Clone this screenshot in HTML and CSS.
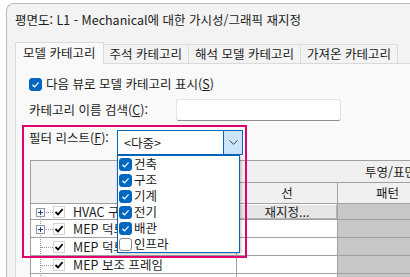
FILE: index.html
```html
<!DOCTYPE html>
<html lang="ko">
<head>
  <meta charset="UTF-8" />
  <title>가시성/그래픽 재지정</title>
  <link rel="stylesheet" href="styles.css">
</head>
<body>
  <div class="window">
    <div class="titlebar">평면도: L1 - Mechanical에 대한 가시성/그래픽 재지정</div>

    <div class="tabs">
      <div class="tab active">모델 카테고리</div>
      <div class="tab">주석 카테고리</div>
      <div class="tab">해석 모델 카테고리</div>
      <div class="tab">가져온 카테고리</div>
    </div>

    <div class="panel">
      <div class="check-row">
        <span class="cb on"><svg viewBox="0 0 13 13"><path d="M3.4 6.7 5.6 8.8 9.6 4.4"/></svg></span>
        <span>다음 뷰로 모델 카테고리 표시(<u>S</u>)</span>
      </div>

      <div class="field-row search-row">
        <span class="field-label">카테고리 이름 검색(<u>C</u>):</span>
        <span class="textbox"></span>
      </div>

      <div class="field-row filter-row">
        <span class="field-label">필터 리스트(<u>F</u>):</span>
        <div class="combo">
          <span class="combo-text">&lt;다중&gt;</span>
          <span class="combo-btn"><svg viewBox="0 0 9 5"><path d="M0.5 0.5 4.5 4.3 8.5 0.5"/></svg></span>
          <!-- 펼쳐진 분야 목록 -->
          <ul class="drop">
            <li><span class="cb on"><svg viewBox="0 0 13 13"><path d="M3.4 6.7 5.6 8.8 9.6 4.4"/></svg></span>건축</li>
            <li><span class="cb on"><svg viewBox="0 0 13 13"><path d="M3.4 6.7 5.6 8.8 9.6 4.4"/></svg></span>구조</li>
            <li><span class="cb on"><svg viewBox="0 0 13 13"><path d="M3.4 6.7 5.6 8.8 9.6 4.4"/></svg></span>기계</li>
            <li><span class="cb on"><svg viewBox="0 0 13 13"><path d="M3.4 6.7 5.6 8.8 9.6 4.4"/></svg></span>전기</li>
            <li><span class="cb on"><svg viewBox="0 0 13 13"><path d="M3.4 6.7 5.6 8.8 9.6 4.4"/></svg></span>배관</li>
            <li><span class="cb"></span>인프라</li>
          </ul>
        </div>
      </div>

      <table class="grid">
        <colgroup>
          <col class="c-name"><col class="c-line"><col class="c-pat"><col class="c-trans">
        </colgroup>
        <tr class="head1">
          <th rowspan="2"></th>
          <th colspan="3">투영/표면</th>
        </tr>
        <tr class="head2">
          <th>선</th>
          <th>패턴</th>
          <th>투명도</th>
        </tr>
        <tr class="first">
          <td><div class="node"><span class="twig top"><span class="plus"></span></span><span class="tick"><svg viewBox="0 0 10 10"><path d="M1.5 5 4 7.5 8.6 2.2"/></svg></span>HVAC 구역</div></td>
          <td class="btn-cell"><span class="reset">재지정...</span></td>
          <td class="hatch"></td>
          <td class="hatch"></td>
        </tr>
        <tr>
          <td><div class="node"><span class="twig"><span class="plus"></span></span><span class="tick"><svg viewBox="0 0 10 10"><path d="M1.5 5 4 7.5 8.6 2.2"/></svg></span>MEP 덕트 단열재</div></td>
          <td></td>
          <td class="hatch"></td>
          <td class="hatch"></td>
        </tr>
        <tr>
          <td><div class="node"><span class="twig"></span><span class="tick"><svg viewBox="0 0 10 10"><path d="M1.5 5 4 7.5 8.6 2.2"/></svg></span>MEP 덕트 라이닝</div></td>
          <td></td>
          <td class="hatch"></td>
          <td class="hatch"></td>
        </tr>
        <tr>
          <td><div class="node"><span class="twig"></span><span class="tick"><svg viewBox="0 0 10 10"><path d="M1.5 5 4 7.5 8.6 2.2"/></svg></span>MEP 보조 프레임</div></td>
          <td></td>
          <td class="hatch"></td>
          <td class="hatch"></td>
        </tr>
        <tr>
          <td><div class="node"><span class="twig"></span><span class="tick"><svg viewBox="0 0 10 10"><path d="M1.5 5 4 7.5 8.6 2.2"/></svg></span>MEP 장비</div></td>
          <td></td>
          <td class="hatch"></td>
          <td class="hatch"></td>
        </tr>
      </table>

      <!-- 강조 표시 테두리 -->
      <div class="highlight"></div>
    </div>
  </div>
</body>
</html>
```

FILE: styles.css
```css
* {
  box-sizing: border-box;
}

html, body {
  margin: 0;
  height: 100%;
  overflow: hidden;
  background: #fff;
}

body {
  font-family: "Noto Sans CJK KR", "Noto Sans", sans-serif;
  font-size: 12.5px;
  line-height: 16px;
  color: #1b1b1b;
}

.window {
  margin: 3px 0 0 6px;
  width: 520px;
  height: 300px;
  border: 1px solid #bcbcbc;
  border-right: 0;
  border-radius: 8px 0 0 0;
  background: #f3f3f3;
}

.titlebar {
  height: 38px;
  padding: 8px 0 0 8px;
}

.tabs {
  display: flex;
  align-items: flex-end;
  height: 21px;
  padding-left: 8px;
  position: relative;
  z-index: 1;
}

.tab {
  height: 19px;
  line-height: 17px;
  padding: 0 6px;
  margin-left: -1px;
  border: 1px solid #dadada;
  border-bottom: 0;
  background: #f3f3f3;
  white-space: nowrap;
}

.tab.active {
  height: 22px;
  line-height: 20px;
  margin-left: 0;
  margin-bottom: -1px;
  padding: 0 7px;
  background: #f9f9f9;
}

.panel {
  position: relative;
  margin-left: 8px;
  height: 240px;
  padding: 10px 0 0 13px;
  border: 1px solid #dadada;
  background: #f9f9f9;
}

.cb {
  display: inline-flex;
  width: 13px;
  height: 13px;
  border: 1px solid #8a8a8a;
  border-radius: 3px;
  background: #fff;
  flex: none;
}

.cb.on {
  border-color: #0067c0;
  background: #0067c0;
}

.cb svg {
  width: 13px;
  height: 13px;
  margin: -1px;
  fill: none;
  stroke: #fff;
  stroke-width: 1.2;
}

.check-row {
  display: flex;
  align-items: center;
  gap: 4px;
  height: 20px;
}

.field-row {
  display: flex;
}

.search-row {
  margin-top: 5px;
  height: 22px;
  align-items: center;
}

.search-row .field-label {
  width: 147px;
}

.textbox {
  width: 165px;
  height: 22px;
  border: 1px solid #e3e3e3;
  border-bottom-color: #8d8d8d;
  border-radius: 3px;
  background: #fff;
}

.filter-row {
  margin-top: 9px;
  height: 25px;
  align-items: flex-start;
}

.filter-row .field-label {
  width: 88px;
}

.combo {
  position: relative;
  display: flex;
  width: 126px;
  height: 25px;
  border: 1px solid #0067c0;
  background: #fff;
}

.combo-text {
  flex: 1;
  padding-left: 6px;
  line-height: 23px;
}

.combo-btn {
  display: flex;
  align-items: center;
  justify-content: center;
  width: 19px;
  border-left: 1px solid #0067c0;
  background: #cce4f7;
}

.combo-btn svg {
  width: 9px;
  height: 5px;
  fill: none;
  stroke: #444;
  stroke-width: 1;
}

.drop {
  position: absolute;
  top: 24px;
  left: -1px;
  z-index: 5;
  width: 123px;
  height: 98px;
  margin: 0;
  padding: 0 0 0 1px;
  list-style: none;
  border: 1px solid #0067c0;
  background: #fff;
  box-shadow: 1px 1px 3px rgba(0, 0, 0, 0.25);
}

.drop li {
  display: flex;
  align-items: center;
  gap: 2px;
  height: 16px;
}

.grid {
  margin: 5px 0 0 1px;
  width: 514px;
  table-layout: fixed;
  border-collapse: collapse;
  background: #fff;
}

.c-name { width: 206px; }
.c-line { width: 101px; }
.c-pat { width: 100px; }
.c-trans { width: 107px; }

.grid th,
.grid td {
  padding: 0;
  border: 1px solid #a0a0a0;
  font-weight: normal;
  white-space: nowrap;
  overflow: hidden;
}

.grid th {
  background: #f0f0f0;
  text-align: center;
}

.head1 th { line-height: 21px; }
.head2 th { line-height: 20px; }

.hatch {
  background: repeating-conic-gradient(#8e8e8e 0 25%, #fff 0 50%) 0 0 / 2px 2px;
}

.btn-cell {
  background: #f3f3f3;
}

.reset {
  display: block;
  height: 15px;
  line-height: 14px;
  text-align: center;
  border: 1px solid #b5b5b5;
  border-top-color: #fff;
  border-left-color: #fff;
  background: #e6e6e6;
}

.node {
  display: flex;
  align-items: center;
  height: 17px;
}

.first .node {
  height: 15px;
}

.twig {
  position: relative;
  align-self: stretch;
  width: 22px;
  flex: none;
}

.twig::before {
  content: "";
  position: absolute;
  left: 9px;
  top: -1px;
  bottom: -1px;
  border-left: 1px dotted #9a9a9a;
}

.twig.top::before {
  top: 50%;
}

.twig::after {
  content: "";
  position: absolute;
  left: 10px;
  right: 0;
  top: 50%;
  border-top: 1px dotted #9a9a9a;
}

.plus {
  position: absolute;
  left: 5px;
  top: 50%;
  z-index: 1;
  width: 9px;
  height: 9px;
  margin-top: -4px;
  border: 1px solid #8c9bb3;
  background:
    linear-gradient(#1f3c88, #1f3c88) center / 5px 1px no-repeat,
    linear-gradient(#1f3c88, #1f3c88) center / 1px 5px no-repeat,
    #fff;
}

.tick {
  display: inline-flex;
  width: 12px;
  height: 12px;
  margin-right: 8px;
  border: 1px solid #d4d4d4;
  background: #fff;
  flex: none;
}

.tick svg {
  width: 10px;
  height: 10px;
  fill: none;
  stroke: #000;
  stroke-width: 1.8;
}

.highlight {
  position: absolute;
  left: 6px;
  top: 61px;
  z-index: 10;
  width: 225px;
  height: 133px;
  border: 2px solid #e0006f;
  pointer-events: none;
}
```
